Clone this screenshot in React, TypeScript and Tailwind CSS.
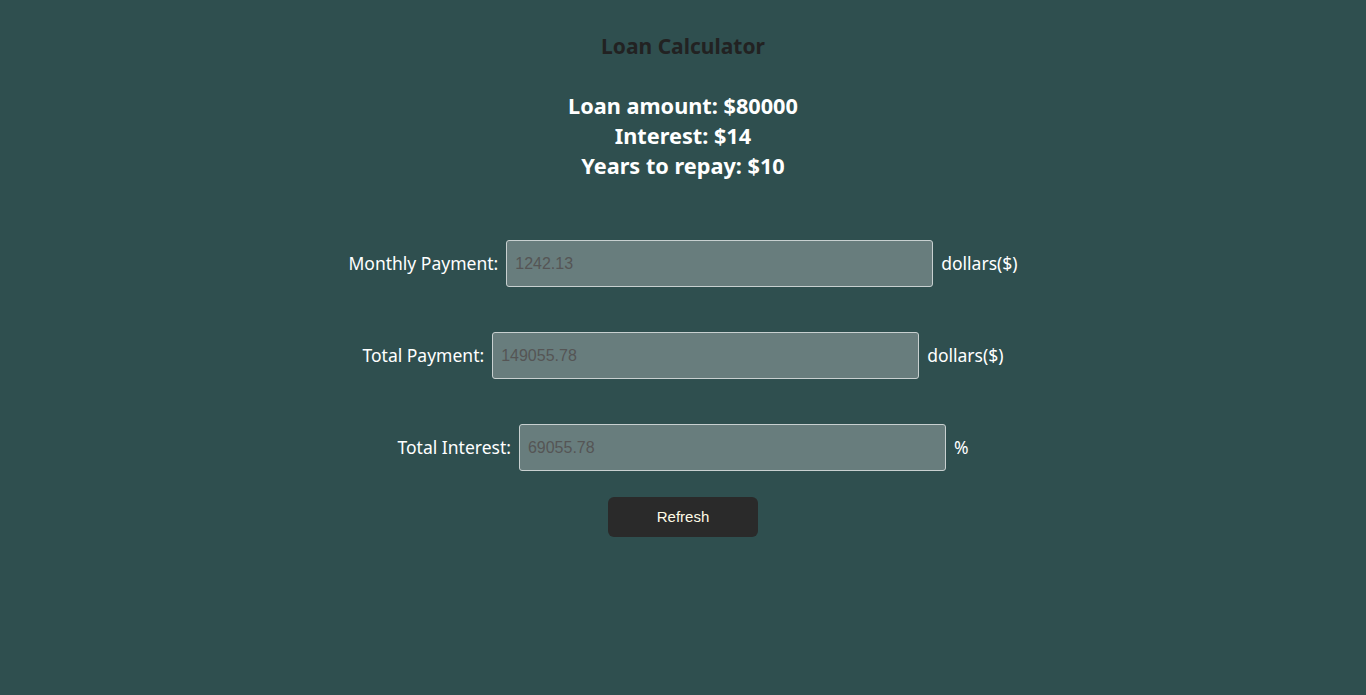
import { useState } from 'react';

const LOAN = 80000;
const RATE = 14;
const YEARS = 10;

function calc() {
  const r = RATE / 100 / 12;
  const n = YEARS * 12;
  const monthly = (LOAN * r) / (1 - Math.pow(1 + r, -n));
  const total = monthly * n;
  return {
    monthly: monthly.toFixed(2),
    total: total.toFixed(2),
    interest: (total - LOAN).toFixed(2),
  };
}

function Row({ label, value, unit }: { label: string; value: string; unit: string }) {
  return (
    <div className="flex items-center justify-center gap-2">
      <span className="text-[17.5px] text-white">{label}</span>
      <input
        readOnly
        placeholder={value}
        className="h-[47px] w-[427px] rounded-[3px] border border-[#c8d0d0] bg-[#687d7d] px-2 font-['Liberation_Sans',Arial,sans-serif] text-[16px] text-[#555] placeholder:text-[#555] outline-none"
      />
      <span className="text-[17.5px] text-white">{unit}</span>
    </div>
  );
}

export default function App() {
  const [vals, setVals] = useState(calc);

  return (
    <div className="min-h-[695px] bg-[#2f4f4f] font-['Noto_Sans',sans-serif] pt-[30px]">
      <h1 className="text-center text-[21px] font-bold text-[#222] leading-[32px]">Loan Calculator</h1>
      <div className="mt-[29px] text-center text-[21.7px] font-bold leading-[30px] text-white">
        <div>Loan amount: ${LOAN}</div>
        <div>Interest: ${RATE}</div>
        <div>Years to repay: ${YEARS}</div>
      </div>
      <div className="mt-[59px] flex flex-col gap-[45px]">
        <Row label="Monthly Payment:" value={vals.monthly} unit="dollars($)" />
        <Row label="Total Payment:" value={vals.total} unit="dollars($)" />
        <Row label="Total Interest:" value={vals.interest} unit="%" />
      </div>
      <div className="mt-[26px] flex justify-center">
        <button
          onClick={() => setVals(calc())}
          className="h-[40px] w-[150px] rounded-[6px] bg-[#2a2a2a] font-['Liberation_Sans',Arial,sans-serif] text-[15px] text-[#fffbe6]"
        >
          Refresh
        </button>
      </div>
    </div>
  );
}
